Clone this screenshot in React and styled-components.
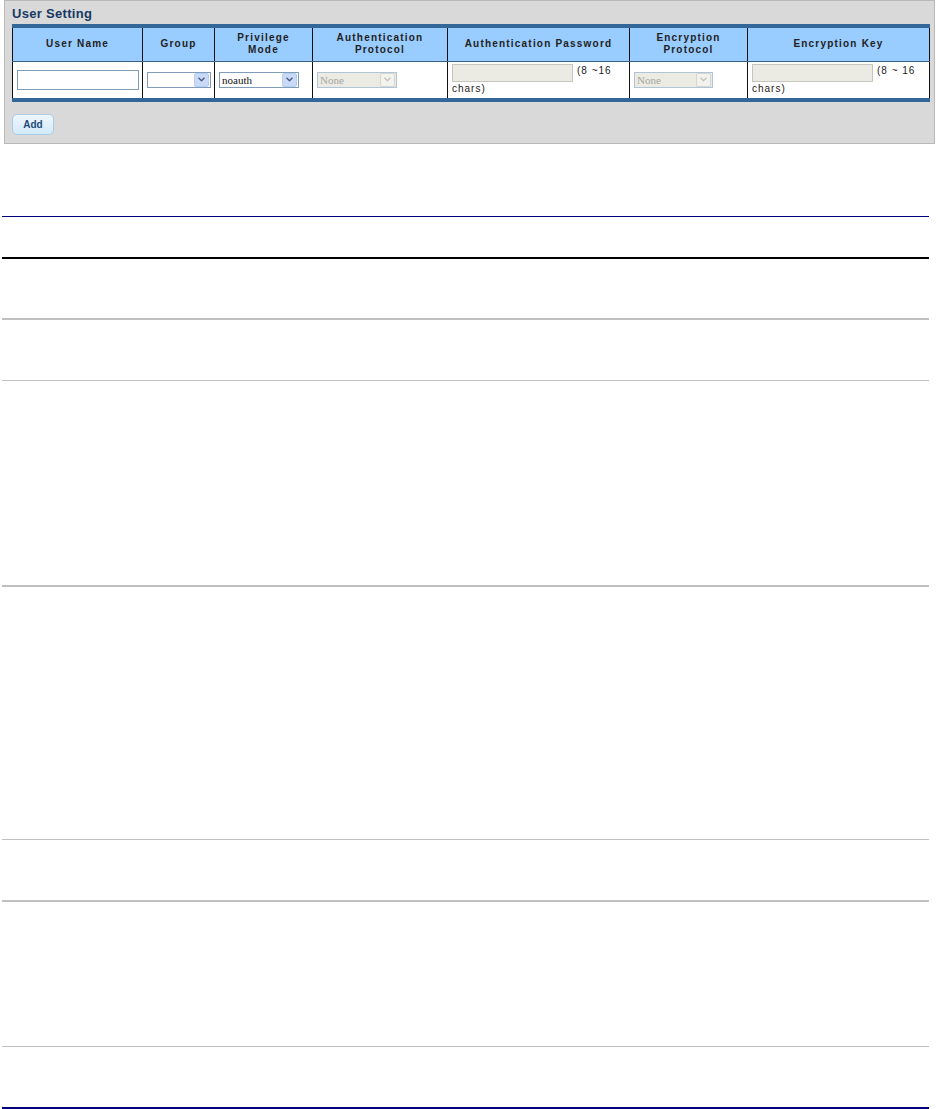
import React from "react";
import styled, { createGlobalStyle } from "styled-components";

const GlobalStyle = createGlobalStyle`
  html, body {
    margin: 0;
    padding: 0;
    background: #ffffff;
    font-family: "Liberation Sans", Arial, sans-serif;
  }
`;

const Page = styled.div`
  padding: 0 0 0 4px;
  width: 931px;
`;

const Panel = styled.div`
  box-sizing: border-box;
  width: 931px;
  background: #d9d9d9;
  border: 1px solid #b9b9b9;
  padding: 3px 5px 8px 7px;
`;

const Title = styled.div`
  height: 18px;
  font-size: 13px;
  font-weight: bold;
  color: #173964;
  letter-spacing: 0.3px;
  line-height: 20px;
`;

const Grid = styled.table`
  margin-top: 2px;
  width: 917px;
  table-layout: fixed;
  border-collapse: collapse;
  border-top: 4px solid #336699;
  border-bottom: 4px solid #336699;
  background: #ffffff;
`;

const HeadRow = styled.tr`
  height: 35px;
`;

const BodyRow = styled.tr`
  height: 39px;
`;

const Head = styled.th`
  background: #99ccff;
  border-left: 1px solid #111;
  border-right: 1px solid #111;
  border-bottom: 1px solid #3b5f86;
  font-size: 10px;
  font-weight: bold;
  letter-spacing: 1.2px;
  color: #222;
  text-align: center;
  line-height: 12px;
  padding: 0 4px;
`;

const Cell = styled.td`
  box-sizing: border-box;
  border-left: 1px solid #111;
  border-right: 1px solid #111;
  padding: 0 4px;
  vertical-align: middle;
  font-size: 10px;
  letter-spacing: 1px;
  color: #222;
  line-height: 13px;
`;

const TextBox = styled.div`
  box-sizing: border-box;
  display: inline-block;
  vertical-align: top;
  width: ${(p) => p.$w}px;
  height: ${(p) => p.$h}px;
  border: 1px solid ${(p) => (p.$disabled ? "#c6c6c0" : "#7f9db9")};
  background: ${(p) => (p.$disabled ? "#ebebe4" : "#ffffff")};
  margin-right: 4px;
`;

const Select = styled.div`
  box-sizing: border-box;
  display: flex;
  align-items: center;
  width: ${(p) => p.$w}px;
  height: 16px;
  border: 1px solid ${(p) => (p.$disabled ? "#b2c4d8" : "#7f9db9")};
  background: ${(p) => (p.$disabled ? "#ebebe4" : "#ffffff")};
  font-family: "Liberation Serif", "Times New Roman", serif;
  font-size: 11px;
  letter-spacing: 0;
  color: ${(p) => (p.$disabled ? "#a7a69c" : "#111")};
`;

const SelectText = styled.span`
  flex: 1;
  padding-left: 2px;
  line-height: 14px;
`;

const Arrow = styled.span`
  box-sizing: border-box;
  width: 15px;
  height: 14px;
  display: flex;
  align-items: center;
  justify-content: center;
  background: ${(p) => (p.$disabled ? "#f2f2ee" : "#c9daf8")};
  border: 1px solid ${(p) => (p.$disabled ? "#d6d6d0" : "#b8cdf2")};
  border-radius: 2px;
  margin-right: 1px;
`;

const AddButton = styled.button`
  display: block;
  margin-top: 12px;
  width: 42px;
  height: 21px;
  border: 1px solid #a9cde8;
  border-radius: 5px;
  background: linear-gradient(#eef7fd, #d3e9f8);
  font-family: "Liberation Sans", Arial, sans-serif;
  font-size: 10px;
  font-weight: bold;
  color: #1f4b7a;
  padding: 0;
`;

const Doc = styled.div`
  margin-top: 72px;
  margin-left: -2px;
  width: 927px;
`;

const Rule = styled.div`
  box-sizing: border-box;
  height: ${(p) => p.$h}px;
  border-top: ${(p) => p.$w}px solid ${(p) => p.$c};
`;

const ArrowIcon = ({ disabled }) => (
  <Arrow $disabled={disabled}>
    <svg width="7" height="5" viewBox="0 0 7 5">
      <path
        d="M0.5 0.8 L3.5 3.8 L6.5 0.8"
        fill="none"
        stroke={disabled ? "#c4c4bc" : "#4d6185"}
        strokeWidth="1.4"
      />
    </svg>
  </Arrow>
);

const FakeSelect = ({ w, value, disabled }) => (
  <Select $w={w} $disabled={disabled}>
    <SelectText>{value}</SelectText>
    <ArrowIcon disabled={disabled} />
  </Select>
);

const cols = [130, 72, 98, 135, 182, 118, 182];

const rules = [
  { h: 41, w: 1, c: "#000080" },
  { h: 61, w: 2, c: "#000000" },
  { h: 62, w: 2, c: "#c0c0c0" },
  { h: 205, w: 1, c: "#c0c0c0" },
  { h: 254, w: 2, c: "#c0c0c0" },
  { h: 61, w: 1, c: "#c0c0c0" },
  { h: 146, w: 2, c: "#c0c0c0" },
  { h: 61, w: 1, c: "#c0c0c0" },
  { h: 2, w: 2, c: "#000080" },
];

const App = () => {
  return (
    <Page>
      <GlobalStyle />
      <Panel>
        <Title>User Setting</Title>
        <Grid>
          <colgroup>
            {cols.map((c, i) => (
              <col key={i} style={{ width: c }} />
            ))}
          </colgroup>
          <thead>
            <HeadRow>
              <Head>User Name</Head>
              <Head>Group</Head>
              <Head>
                Privilege
                <br />
                Mode
              </Head>
              <Head>Authentication Protocol</Head>
              <Head>Authentication Password</Head>
              <Head>Encryption Protocol</Head>
              <Head>Encryption Key</Head>
            </HeadRow>
          </thead>
          <tbody>
            <BodyRow>
              <Cell>
                <TextBox $w={122} $h={20} />
              </Cell>
              <Cell>
                <FakeSelect w={64} value="" />
              </Cell>
              <Cell>
                <FakeSelect w={80} value="noauth" />
              </Cell>
              <Cell>
                <FakeSelect w={80} value="None" disabled />
              </Cell>
              <Cell>
                <TextBox $w={121} $h={18} $disabled />
                (8 ~16 chars)
              </Cell>
              <Cell>
                <FakeSelect w={79} value="None" disabled />
              </Cell>
              <Cell>
                <TextBox $w={121} $h={18} $disabled />
                (8 ~ 16 chars)
              </Cell>
            </BodyRow>
          </tbody>
        </Grid>
        <AddButton>Add</AddButton>
      </Panel>
      <Doc>
        {rules.map((r, i) => (
          <Rule key={i} $h={r.h} $w={r.w} $c={r.c} />
        ))}
      </Doc>
    </Page>
  );
};

export default App;
